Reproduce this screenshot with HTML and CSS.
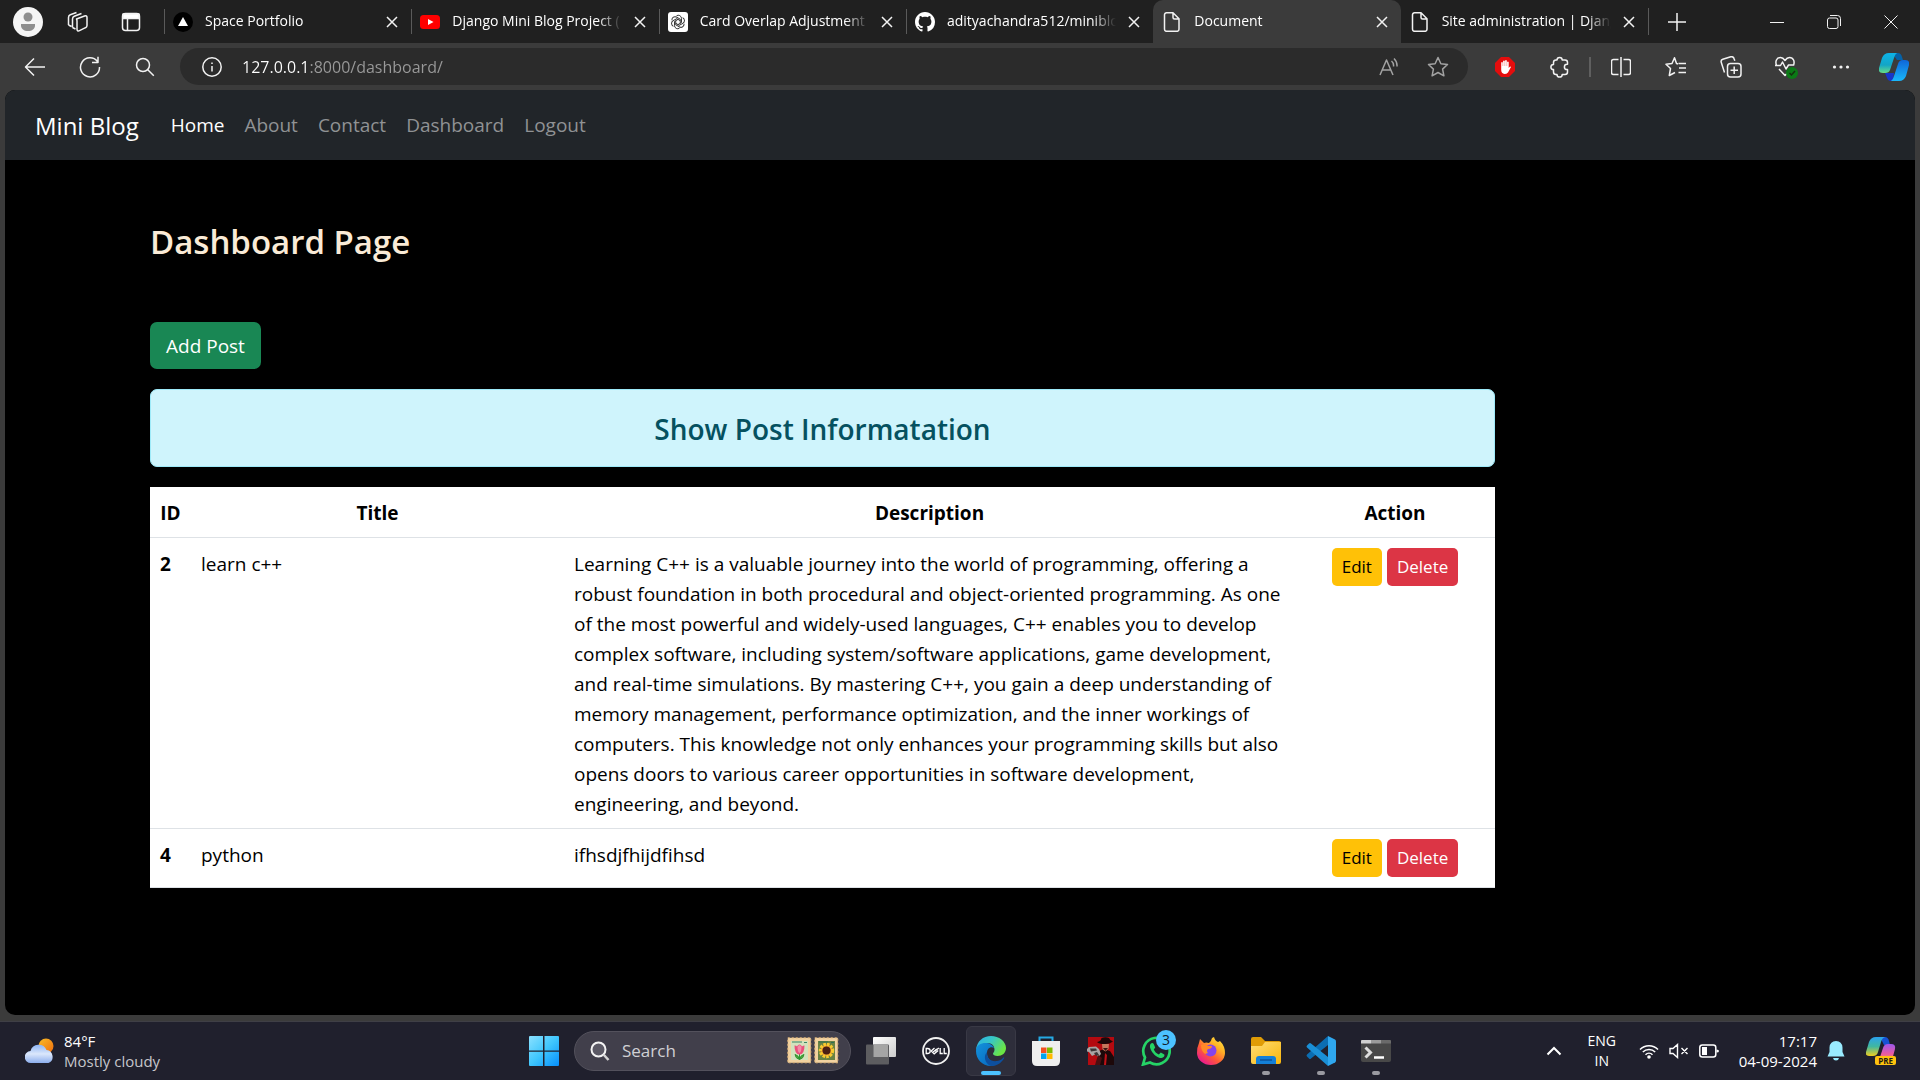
FILE: index.html
```html
<!DOCTYPE html>
<html lang="en">
<head>
<meta charset="utf-8">
<title>Document</title>
<link rel="stylesheet" href="styles.css">
</head>
<body>
<header class="browser">
  <div class="tabstrip">
    <div class="strip-tools">
      <button class="ghost profile" aria-label="Profile"><svg width="30" height="30" viewBox="0 0 30 30"><circle cx="15" cy="15" r="15" fill="#f5f5f5"/><circle cx="15" cy="10" r="4.500" fill="#8e8e8e"/><path d="M8 17h14v1.500c0 3.500-3 5.500-7 5.500s-7-2-7-5.500z" fill="#8e8e8e"/></svg></button>
      <button class="ghost" aria-label="Workspaces"><svg class="line" width="22" height="22" viewBox="0 0 22 22"><path d="M9.500 8l8-3c1.500-.5 2.500 0 2.500 1.500v8c0 1-.5 1.800-1.500 2.200l-6 3c-1.500.8-2.500 0-2.500-1.500V10c0-1-.2-1.500-.5-2zM5.500 16.500V8c0-1.500.6-2.200 1.800-2.700L14.500 2.500M1.500 14V6.500c0-1.500.6-2.300 1.800-2.800L9.500 1.500M5.500 16.500l3 1.500M1.500 14l3 1.500"/></svg></button>
      <button class="ghost" aria-label="Tab actions"><svg class="line" width="20" height="20" viewBox="0 0 20 20"><rect x="1.500" y="1.500" width="17" height="17" rx="3"/><path d="M2 2h16v4.500H2z" fill="#fff"/><path d="M6.500 6v12"/></svg></button>
    </div>
    <div class="tabs">
      <div class="tab"><svg width="20" height="20" viewBox="0 0 20 20"><circle cx="10" cy="10" r="10" fill="#000"/><path d="M10 5l5 9H5z" fill="#fff"/></svg><a class="tab-title" href="#">Space Portfolio</a><button class="ghost close" aria-label="Close tab"><svg class="line" width="12" height="12" viewBox="0 0 12 12"><path d="M1 1l10 10M11 1L1 11"/></svg></button></div>
      <div class="tab"><svg width="20" height="20" viewBox="0 0 20 20"><rect y="3" width="20" height="14" rx="3.500" fill="#f00"/><path d="M8 7l5.500 3L8 13z" fill="#fff"/></svg><a class="tab-title" href="#">Django Mini Blog Project (</a><button class="ghost close" aria-label="Close tab"><svg class="line" width="12" height="12" viewBox="0 0 12 12"><path d="M1 1l10 10M11 1L1 11"/></svg></button></div>
      <div class="tab"><svg width="20" height="20" viewBox="0 0 20 20"><rect width="20" height="20" rx="3" fill="#fff"/><g fill="none" stroke="#222" stroke-width=".9"><path id="petal" d="M8.500 3.800a3.200 3.200 0 0 1 5 2.700v4L10 12.600"/><use href="#petal" transform="rotate(60 10 10)"/><use href="#petal" transform="rotate(120 10 10)"/><use href="#petal" transform="rotate(180 10 10)"/><use href="#petal" transform="rotate(240 10 10)"/><use href="#petal" transform="rotate(300 10 10)"/></g></svg><a class="tab-title" href="#">Card Overlap Adjustment</a><button class="ghost close" aria-label="Close tab"><svg class="line" width="12" height="12" viewBox="0 0 12 12"><path d="M1 1l10 10M11 1L1 11"/></svg></button></div>
      <div class="tab"><svg width="20" height="20" viewBox="0 0 16 16"><path fill="#fff" d="M8 0C3.580 0 0 3.580 0 8c0 3.540 2.290 6.530 5.470 7.590.4.070.55-.17.55-.38 0-.19-.01-.82-.01-1.490-2.010.37-2.530-.49-2.690-.94-.09-.23-.48-.94-.82-1.130-.28-.15-.68-.52-.01-.53.63-.01 1.080.58 1.230.82.72 1.210 1.870.87 2.330.66.070-.52.28-.87.51-1.070-1.780-.2-3.640-.89-3.640-3.950 0-.87.31-1.590.82-2.150-.08-.2-.36-1.020.08-2.120 0 0 .67-.21 2.200.82.64-.18 1.320-.27 2-.27s1.360.09 2 .27c1.530-1.040 2.200-.82 2.200-.82.44 1.100.16 1.920.08 2.120.51.56.82 1.270.82 2.150 0 3.070-1.870 3.750-3.650 3.950.29.25.54.73.54 1.480 0 1.070-.01 1.930-.01 2.200 0 .21.15.46.55.38A8.010 8.010 0 0 0 16 8c0-4.420-3.580-8-8-8z"/></svg><a class="tab-title" href="#">adityachandra512/miniblo</a><button class="ghost close" aria-label="Close tab"><svg class="line" width="12" height="12" viewBox="0 0 12 12"><path d="M1 1l10 10M11 1L1 11"/></svg></button></div>
      <div class="tab active"><svg class="line doc" width="20" height="20" viewBox="0 0 20 20"><path d="M4.500.8h6.500l6 6v10.500a2 2 0 0 1-2 2H4.500a2 2 0 0 1-2-2V2.800a2 2 0 0 1 2-2zM11 1v4.500a1.500 1.500 0 0 0 1.500 1.500H17"/></svg><a class="tab-title" href="#">Document</a><button class="ghost close" aria-label="Close tab"><svg class="line" width="12" height="12" viewBox="0 0 12 12"><path d="M1 1l10 10M11 1L1 11"/></svg></button></div>
      <div class="tab"><svg class="line doc" width="20" height="20" viewBox="0 0 20 20"><path d="M4.500.8h6.500l6 6v10.500a2 2 0 0 1-2 2H4.500a2 2 0 0 1-2-2V2.800a2 2 0 0 1 2-2zM11 1v4.500a1.500 1.500 0 0 0 1.500 1.500H17"/></svg><a class="tab-title" href="#">Site administration | Djang</a><button class="ghost close" aria-label="Close tab"><svg class="line" width="12" height="12" viewBox="0 0 12 12"><path d="M1 1l10 10M11 1L1 11"/></svg></button></div>
    </div>
    <button class="ghost newtab" aria-label="New tab"><svg class="line" width="18" height="18" viewBox="0 0 18 18"><path d="M9 0v18M0 9h18"/></svg></button>
    <div class="window-controls">
      <button class="ghost" aria-label="Minimize"><svg class="line thin" width="14" height="14" viewBox="0 0 14 14"><path d="M0 7.500h14"/></svg></button>
      <button class="ghost" aria-label="Restore"><svg class="line thin" width="14" height="14" viewBox="0 0 14 14"><rect x=".5" y="3" width="10.500" height="10.500" rx="2"/><path d="M3 .5h7.500a3 3 0 0 1 3 3V11"/></svg></button>
      <button class="ghost" aria-label="Close"><svg class="line thin" width="14" height="14" viewBox="0 0 14 14"><path d="M.5.5l13 13M13.500.5l-13 13"/></svg></button>
    </div>
  </div>
  <div class="toolbar">
    <div class="nav-tools">
      <button class="ghost" aria-label="Back"><svg class="line" width="22" height="20" viewBox="0 0 22 20"><path d="M21 10H2M10 1.500L1.500 10l8.500 8.500"/></svg></button>
      <button class="ghost" aria-label="Refresh"><svg class="line" width="22" height="22" viewBox="0 0 22 22"><path d="M18.500 5.500A9.500 9.500 0 1 0 20.500 11M19 .8v5.700h-6"/></svg></button>
      <button class="ghost" aria-label="Search"><svg class="line" width="20" height="20" viewBox="0 0 20 20"><circle cx="8" cy="8" r="6.500"/><path d="M12.800 12.800l6 6"/></svg></button>
    </div>
    <div class="address">
      <button class="ghost" aria-label="Site information"><svg class="line" width="20" height="20" viewBox="0 0 20 20"><circle cx="10" cy="10" r="9.200"/><path d="M10 9v5.500M10 5.500v1.500"/></svg></button>
      <input class="url" type="text" value="127.0.0.1:8000/dashboard/" aria-label="Address">
      <button class="ghost dim" aria-label="Read aloud"><svg class="line" width="20" height="20" viewBox="0 0 20 20"><path d="M1 18L7.500 3 14 18M3.500 13h8M12.500 4a6 6 0 0 1 2 5.500M15 1.500a10 10 0 0 1 3 8"/></svg></button>
      <button class="ghost dim" aria-label="Favorite this page"><svg class="line" width="22" height="22" viewBox="0 0 22 22"><path d="M11 1.500l2.900 6.200 6.600.8-4.900 4.600 1.300 6.700L11 16.500l-5.900 3.300 1.300-6.700L1.500 8.500l6.600-.8z"/></svg></button>
    </div>
    <div class="extensions">
      <button class="ghost" aria-label="Ad blocker"><svg width="20" height="20" viewBox="0 0 20 20"><path d="M6 0h8l6 6v8l-6 6H6l-6-6V6z" fill="#e40d0d"/><path d="M6.200 10V5.500q.8-1 1.600 0V9h.3V4q.9-1 1.700 0v5h.3V3.500q.9-1 1.700 0V9h.3V5q.8-1 1.600 0v6l1-1.200q1-.6 1.300.2L13 15.500Q11.500 17 9.500 17q-3.300-.5-3.300-4z" fill="#fff"/></svg></button>
      <button class="ghost" aria-label="Extensions"><svg class="line" width="20" height="22" viewBox="0 0 20 22"><path d="M7 4a2.600 2.600 0 0 1 5.200 0H15a2.500 2.500 0 0 1 2.500 2.500V8.300H17a2.500 2.500 0 0 0 0 5.200h.5v2.500A2.500 2.500 0 0 1 15 18.500h-2.800a2.600 2.600 0 0 1-5.200 0H6A2.500 2.500 0 0 1 3.500 16v-2.400a2.600 2.600 0 0 1 0-5.200V6.500A2.500 2.500 0 0 1 6 4z"/></svg></button>
      <span class="rule"></span>
      <button class="ghost" aria-label="Split screen"><svg class="line" width="20" height="20" viewBox="0 0 20 20"><path d="M7.500 2.500h-5a2 2 0 0 0-2 2v11a2 2 0 0 0 2 2h5M12.500 2.500h5a2 2 0 0 1 2 2v11a2 2 0 0 1-2 2h-5M10 0v20"/></svg></button>
      <button class="ghost" aria-label="Favorites"><svg class="line" width="22" height="20" viewBox="0 0 22 20"><path d="M13 7l-1.500-.5L9.500.8 7 6.500l-6 .8 4.500 4.200L4.300 18.500l5.700-3M13.500 6.500H21M14 11h7M13.500 15.500H21"/></svg></button>
      <button class="ghost" aria-label="Collections"><svg class="line" width="22" height="22" viewBox="0 0 22 22"><rect x="7.500" y="7.500" width="13.500" height="13.500" rx="3"/><path d="M14.200 10.500v7.500M10.500 14.200h7.500M4.500 16.500L1.300 6.500a2.500 2.500 0 0 1 1.500-3.200l8-2.500A2.500 2.500 0 0 1 14 2.500l.8 2.200"/></svg></button>
      <button class="ghost" aria-label="Browser essentials"><svg width="24" height="24" viewBox="0 0 24 24"><path class="line" d="M2.500 10.500C1 6.500 2.500 2.500 6.500 2.500c2.500 0 3.500 1.500 4.500 3 1-1.500 2-3 4.500-3 4 0 5.500 4 4 8M1 10.500h5.500l2-3.500 3.500 7 2.500-4h5M5 14l6 6.500 2-2"/><circle cx="18" cy="18" r="6" fill="#0b7a16"/><path d="M15.500 18l2 2 3.500-4" fill="none" stroke="#14310f" stroke-width="1.500"/></svg></button>
      <button class="ghost" aria-label="Settings and more"><svg width="18" height="18" viewBox="0 0 18 18" fill="#f2f2f2"><circle cx="2.500" cy="9" r="1.600"/><circle cx="9" cy="9" r="1.600"/><circle cx="15.500" cy="9" r="1.600"/></svg></button>
      <button class="ghost" aria-label="Copilot"><svg width="30" height="28" viewBox="0 0 30 28"><defs><linearGradient id="cpA" x1="0" y1="0" x2="0" y2="1"><stop offset="0" stop-color="#0db3e8"/><stop offset=".6" stop-color="#13a5c6"/><stop offset="1" stop-color="#66dd87"/></linearGradient><linearGradient id="cpB" x1="0" y1="0" x2="0" y2="1"><stop offset="0" stop-color="#0f66d8"/><stop offset="1" stop-color="#19b8fa"/></linearGradient></defs><path d="M13 0h6q3 0 4 4l1 3h-6z" fill="#0562a8"/><path d="M6 20h9l-1 8h-2q-3 0-4-3z" fill="#1736c9"/><path d="M10 0h8q-2 1-3 5l-4 12q-1 3-5 3H4q-5 0-4-5L3 5q2-5 7-5z" fill="url(#cpA)"/><path d="M20 28h-8q2-1 3-5l4-12q1-4 5-4h2q5 0 4 5l-3 11q-2 5-7 5z" fill="url(#cpB)"/></svg></button>
    </div>
  </div>
</header>

<div class="viewport">
  <div class="page">
    <nav class="navbar">
      <a class="brand" href="#">Mini Blog</a>
      <a class="nav-link current" href="#">Home</a>
      <a class="nav-link" href="#">About</a>
      <a class="nav-link" href="#">Contact</a>
      <a class="nav-link" href="#">Dashboard</a>
      <a class="nav-link" href="#">Logout</a>
    </nav>
    <main class="content">
      <h1>Dashboard Page</h1>
      <a class="btn add" href="#">Add Post</a>
      <h2 class="alert">Show Post Informatation</h2>
      <table class="posts">
        <thead>
          <tr><th class="col-id" scope="col">ID</th><th class="col-title" scope="col">Title</th><th scope="col">Description</th><th class="col-action" scope="col">Action</th></tr>
        </thead>
        <tbody>
          <tr>
            <th scope="row">2</th><td>learn c++</td>
            <td>Learning C++ is a valuable journey into the world of programming, offering a<br>robust foundation in both procedural and object-oriented programming. As one<br>of the most powerful and widely-used languages, C++ enables you to develop<br>complex software, including system/software applications, game development,<br>and real-time simulations. By mastering C++, you gain a deep understanding of<br>memory management, performance optimization, and the inner workings of<br>computers. This knowledge not only enhances your programming skills but also<br>opens doors to various career opportunities in software development,<br>engineering, and beyond.</td>
            <td class="action-cell"><div class="actions"><a class="btn small edit" href="#">Edit</a><button class="btn small delete">Delete</button></div></td>
          </tr>
          <tr>
            <th scope="row">4</th><td>python</td><td>ifhsdjfhijdfihsd</td>
            <td class="action-cell"><div class="actions"><a class="btn small edit" href="#">Edit</a><button class="btn small delete">Delete</button></div></td>
          </tr>
        </tbody>
      </table>
    </main>
  </div>
</div>

<footer class="taskbar">
  <button class="ghost weather">
    <svg width="30" height="26" viewBox="0 0 30 26"><defs><linearGradient id="sun" x1="0" y1="0" x2="1" y2="1"><stop offset="0" stop-color="#f9bd27"/><stop offset="1" stop-color="#ef6c0d"/></linearGradient><linearGradient id="cloud" x1="0" y1="0" x2="0" y2="1"><stop offset="0" stop-color="#8fb6f5"/><stop offset=".5" stop-color="#dbe7fb"/><stop offset="1" stop-color="#8caeee"/></linearGradient></defs><circle cx="21" cy="8" r="7.500" fill="url(#sun)"/><path d="M6 25a6 6 0 0 1-.5-12 8.500 8.500 0 0 1 16-1A6.800 6.800 0 0 1 23.500 25z" fill="url(#cloud)"/></svg>
    <span class="weather-text"><span class="temp">84°F</span><span class="sky">Mostly cloudy</span></span>
  </button>
  <div class="apps">
    <button class="app" aria-label="Start"><svg width="30" height="30" viewBox="0 0 30 30"><defs><linearGradient id="win" gradientUnits="userSpaceOnUse" x1="0" y1="0" x2="30" y2="30"><stop offset="0" stop-color="#8be1ff"/><stop offset=".5" stop-color="#3fc6fd"/><stop offset="1" stop-color="#068ffb"/></linearGradient></defs><path d="M0 1q0-1 1-1h13v14.500H0zM15.500 0H29q1 0 1 1v13.500H15.500zM0 15.800h14V30H1q-1 0-1-1zM15.500 15.800H30V29q0 1-1 1H15.500z" fill="url(#win)"/></svg></button>
    <label class="search">
      <svg width="20" height="20" viewBox="0 0 20 20"><circle cx="8.500" cy="8.500" r="7" fill="#5b5965" stroke="#f4f4f4" stroke-width="2"/><path d="M13.500 13.500l5 5.500" stroke="#d5d5d5" stroke-width="2.500"/></svg>
      <input type="text" placeholder="Search" aria-label="Search">
      <svg width="52" height="27" viewBox="0 0 52 27"><g fill="#f2d2a0" stroke="#d9ae74" stroke-dasharray="2 2"><rect x=".8" y=".8" width="23" height="25"/><rect x="27.800" y=".8" width="23" height="25"/></g><path fill="#d3e2bd" d="M4 4h17v19H4z"/><path fill="#688243" d="M31 4h17v19H31z"/><path d="M12.500 15v7M12.500 22.500q-4-1-4.500-5 3.500.5 4.500 5 1-4.500 4.500-5-.5 4-4.500 5z" stroke="#2f9132" fill="#52ad3e"/><path d="M7.500 8.500q2 0 2.500 1 1-2 2.500-2t2.500 2q1-1 2.500-1 0 9-5 9t-5-9z" fill="#ea4f7c"/><path d="M10.500 10q2-4 4 0 0 5-2 6-2-1-2-6z" fill="#f58aa6"/><circle cx="39.500" cy="13.500" r="6" fill="#e9902b" stroke="#f8ca2f" stroke-width="3.500" stroke-dasharray="2.500 1"/><circle cx="39.500" cy="13.500" r="4" fill="#4a1f14"/><path d="M5 5h10M17 5.500h3" stroke="#3c8462"/><path d="M32 5h9M44 5.500h3" stroke="#2f6d52"/></svg>
    </label>
    <button class="app" aria-label="Task view"><svg width="30" height="28" viewBox="0 0 30 28"><defs><linearGradient id="tv" x1="0" y1="0" x2="1" y2="1"><stop offset="0" stop-color="#fff"/><stop offset="1" stop-color="#ccc"/></linearGradient></defs><rect x="7" width="23" height="20" rx="1" fill="url(#tv)"/><rect y="7.500" width="23" height="20" rx="1" fill="#5d5d60"/><path d="M7.500 8H22v12H7.500z" fill="#a5a5a5"/></svg></button>
    <button class="app" aria-label="Dell"><svg width="28" height="28" viewBox="0 0 28 28"><circle cx="14" cy="14" r="13" fill="none" stroke="#f1f1f1" stroke-width="1.800"/><g fill="none" stroke="#fff" stroke-width="1.300"><path d="M4.200 11.500v5h1.300q2.700 0 2.700-2.500t-2.700-2.500z"/><path d="M12.500 11l-3.300 3 3 2.800 4-3.300M10.800 15.300l4-3.200M16.800 11l-4 3.300M18.200 11v5.500h2.600M22.200 11v5.500h2.600"/></g></svg></button>
    <button class="app running focused" aria-label="Microsoft Edge"><svg width="30" height="30" viewBox="0 0 30 30"><defs><linearGradient id="e1" x1="0" y1="0" x2="1" y2=".5"><stop offset="0" stop-color="#2aaee8"/><stop offset=".5" stop-color="#38c7c6"/><stop offset="1" stop-color="#6be644"/></linearGradient><linearGradient id="e2" x1="0" y1="0" x2="1" y2="1"><stop offset="0" stop-color="#1492dc"/><stop offset="1" stop-color="#0665bb"/></linearGradient></defs><path d="M0 14C1 5 7 0 15 0s15 5.500 15 12c0 5-4 8-8.500 8-3 0-4.500-1-4.500-2.200 0-1 1.500-1.600 1.500-4C18.500 9 14 6 9 7.500 4.500 9 1 11 0 14z" fill="url(#e1)"/><path d="M0 15C0 9 5 7 9.500 7c4 0 7.500 2 8.500 5-3-2-7 0-7 5 0 6 5 10 10 9.500C19 29 17 30 15 30 6 30 0 23 0 15z" fill="url(#e2)"/><path d="M11 16c-1 6 4 10 10 9 3-.5 5.500-2 6.500-3.500.6-.8 1 .1.500.9C25 27.500 20 30 15 30c-6-2-8-10-4-14z" fill="#0d4f9e"/></svg></button>
    <button class="app" aria-label="Microsoft Store"><svg width="30" height="30" viewBox="0 0 30 30"><path d="M8.500 6V1.500h13V6" fill="none" stroke="#25a9e4" stroke-width="2"/><path d="M1 5h28v20q0 5-5 5H6q-5 0-5-5z" fill="#efefef"/><path d="M10 11.500h5.500V17H10z" fill="#f25022"/><path d="M16 11.500h5.500V17H16z" fill="#7fba00"/><path d="M10 17.500h5.500V23H10z" fill="#00a4ef"/><path d="M16 17.500h5.500V23H16z" fill="#ffb900"/></svg></button>
    <button class="app" aria-label="Game"><svg width="28" height="28" viewBox="0 0 28 28"><path d="M1 0h26v28H1z" fill="#b40a10"/><path d="M12 14l5-2 6 2 4 6v8H11z" fill="#1d0809"/><path d="M10 5q4-.5 4.500-4 4-1.500 7.500 0 1 3 4 3.500-4 3-9 2.500-5 0-7-2z" fill="#1c0809"/><path d="M15 7h7l-.5 5-3 2.500-3-2z" fill="#c4785c"/><path d="M16 11h5l-2.500 3z" fill="#3b1512"/><path d="M0 12l2-2 7-.5 3 2.500 2 5-3 3-2-3-4 2-3-4-2-.5z" fill="#a9a4a4"/><path d="M3 11.500h6l1 2-6 1zM7 16l3-1 2 3-3 1z" fill="#3a3536"/><path d="M11 18l4 3-2 7H8z" fill="#4a0f11"/><path d="M18 16l2 2-1 10h-2z" fill="#c01218"/></svg></button>
    <button class="app" aria-label="WhatsApp"><svg width="30" height="30" viewBox="0 0 30 30"><path d="M2 28.500l2-7A13.200 13.200 0 1 1 9 26.500z" fill="none" stroke="#25d366" stroke-width="2.700"/><path d="M10 7.500c-4 4 4.500 15 10.500 14.500 2-.2 3.500-2 2.800-3.500l-3.500-2-2 2c-2.500-1-4-2.700-5-5l1.400-2-1.500-3.500q-1-1.500-2.700-.5z" fill="#25d366"/></svg><span class="badge">3</span></button>
    <button class="app" aria-label="Firefox"><svg width="28" height="28" viewBox="0 0 28 28"><defs><linearGradient id="ff" x1="1" y1="0" x2=".2" y2="1"><stop offset="0" stop-color="#fff04a"/><stop offset=".35" stop-color="#ffb325"/><stop offset=".65" stop-color="#ff5a37"/><stop offset="1" stop-color="#e8119b"/></linearGradient></defs><path d="M2 6l1-4 4 4q2-1 5 0 2-1 3-5l2-1q1 4 4 5l2-1q5 5 5 12a14 12 0 0 1-28 0q0-6 2-10z" fill="url(#ff)"/><circle cx="13.500" cy="13.500" r="6" fill="#8544ec"/><path d="M4 8q4-2 7 1h4q0 3-4 3-2 2 0 4l-3 1q-4-3-4-9z" fill="#ff8a28"/></svg></button>
    <button class="app running" aria-label="File Explorer"><svg width="30" height="27" viewBox="0 0 30 27"><defs><linearGradient id="fo" x1="0" y1="0" x2="1" y2="1"><stop offset="0" stop-color="#ffdd76"/><stop offset="1" stop-color="#f9b60a"/></linearGradient></defs><path d="M0 2q0-2 2-2h8l4 4h14q2 0 2 2v4H0z" fill="#e09c06"/><path d="M0 9h11l3-4h16v20q0 2-2 2H2q-2 0-2-2z" fill="url(#fo)"/><path d="M5 27v-5q0-3 3-3h14q3 0 3 3v5z" fill="#1480d8"/><path d="M9 23h12" stroke="#0b539c" stroke-width="1.500"/></svg></button>
    <button class="app running" aria-label="Visual Studio Code"><svg width="30" height="30" viewBox="0 0 30 30"><path d="M22 0v9L5 22.500q-1 1-2 0l-2-2q-1-1 0-2z" fill="#0b6db2"/><path d="M1 9.500l2-2q1-1 2 0L22 21v9L1 11.500q-1-1 0-2z" fill="#1a8fd6"/><path d="M22 0l7 3.500q1 .5 1 2v19q0 1.500-1 2L22 30z" fill="#2fa7ee"/></svg></button>
    <button class="app running" aria-label="Terminal"><svg width="30" height="24" viewBox="0 0 30 24"><rect y="1" width="30" height="22" rx="2" fill="#484848"/><path d="M0 4.500V2q0-1 1-1h9v3.500z" fill="#d0d0d0"/><path d="M10 1h10v3.500H10z" fill="#9b9b9b"/><path d="M20 1h9q1 0 1 1v2.500H20z" fill="#6a6a6a"/><path d="M4.500 8.500l5 5-5 5" fill="none" stroke="#ddd" stroke-width="3"/><path d="M13 18.500h10" stroke="#fff" stroke-width="2.500"/></svg></button>
  </div>
  <div class="tray">
    <button class="ghost chevron" aria-label="Show hidden icons"><svg width="16" height="10" viewBox="0 0 16 10"><path d="M1.500 8.500L8 2l6.500 6.500" fill="none" stroke="#fff" stroke-width="2"/></svg></button>
    <button class="ghost language">ENG<br>IN</button>
    <button class="ghost status" aria-label="Network, volume and battery">
      <svg width="20" height="16" viewBox="0 0 20 16"><g fill="none" stroke="#fff" stroke-width="1.500"><path d="M1 6.500a12.500 12.500 0 0 1 18 0M3.800 9a8.800 8.800 0 0 1 12.400 0M6.500 11.700a5 5 0 0 1 7 0"/></g><circle cx="10" cy="14" r="1.800" fill="#fff"/></svg>
      <svg width="20" height="16" viewBox="0 0 20 16" fill="none" stroke="#fff" stroke-width="1.400"><path d="M1 5.500h3L8.500 1.500v13L4 10.500H1zM12.500 5l6 6M18.500 5l-6 6"/></svg>
      <svg width="20" height="16" viewBox="0 0 20 16"><rect x=".8" y="2" width="16" height="12" rx="2.500" fill="none" stroke="#fff" stroke-width="1.500"/><path d="M3 4h5v8H3zM17.500 6.500q2.500 0 2.500 1.500t-2.500 1.500z" fill="#fff"/></svg>
    </button>
    <button class="ghost clock">17:17<br>04-09-2024</button>
    <button class="ghost" aria-label="Notifications"><svg width="18" height="20" viewBox="0 0 18 20"><path d="M9 0q6 0 6.500 6.500V11l2 4.500H.5l2-4.500V6.500Q3 0 9 0zM6 17h6q-.5 2.500-3 2.500T6 17z" fill="#99ebff"/></svg></button>
    <button class="ghost copilot" aria-label="Copilot preview"><svg width="30" height="28" viewBox="0 0 30 28"><defs><linearGradient id="ca" x1="0" y1="0" x2="0" y2="1"><stop offset="0" stop-color="#2ba2ee"/><stop offset=".5" stop-color="#40b7a0"/><stop offset="1" stop-color="#f0ce1f"/></linearGradient><linearGradient id="cb" x1="0" y1="0" x2="0" y2="1"><stop offset="0" stop-color="#9c58ed"/><stop offset=".6" stop-color="#e75aa4"/><stop offset="1" stop-color="#f98a5b"/></linearGradient></defs><path d="M14 0h5q3 0 4 4l1 4h-6z" fill="#1652d4"/><path d="M10 0h9q-3 1-4 5l-3 10q-1 4-5 4H3q-4 0-3-4L3 5q2-5 7-5z" fill="url(#ca)"/><path d="M13 23l4-12q1-4 5-4h3q5 0 4 5l-3 11z" fill="url(#cb)"/></svg><span class="pre">PRE</span></button>
  </div>
</footer>
</body>
</html>
```
FILE: styles.css
```css
* { box-sizing: border-box; }

body {
  margin: 0;
  min-height: 100vh;
  display: flex;
  flex-direction: column;
  background: #3b3b3b;
  color: #fff;
  font-family: "Open Sans", "Noto Sans", sans-serif;
  font-size: 19px;
}

a { color: inherit; text-decoration: none; }
button, input { font: inherit; color: inherit; }
svg { display: block; flex: none; }

.ghost {
  display: flex;
  align-items: center;
  justify-content: center;
  border: 0;
  padding: 0;
  background: none;
}

.line { fill: none; stroke: #f2f2f2; stroke-width: 1.5; stroke-linejoin: round; }
.thin { stroke-width: 1; }

/* Browser tabs */
.tabstrip { display: flex; height: 43px; background: #202020; font-size: 14px; }
.strip-tools { display: flex; align-items: center; gap: 32px; width: 164px; padding-left: 13px; }
.strip-tools .profile { margin-right: -8px; }
.tabs { flex: 1; display: flex; min-width: 0; }

.tab {
  flex: 1 1 0;
  min-width: 0;
  display: flex;
  align-items: center;
  gap: 12px;
  padding: 0 13px 0 9px;
  position: relative;
}
.tab::before {
  content: "";
  position: absolute;
  left: 0;
  top: 9px;
  bottom: 9px;
  width: 1px;
  background: #5a5a5a;
}
.tab:last-child { border-right: 1px solid transparent; border-image: linear-gradient(transparent 9px, #5a5a5a 9px, #5a5a5a 34px, transparent 34px) 1; }
.tab.active { background: #3b3b3b; border-radius: 10px 10px 0 0; }
.tab.active::before, .tab.active + .tab::before { display: none; }
.tab-title {
  flex: 1;
  overflow: hidden;
  padding-bottom: 2px;
  white-space: nowrap;
  mask-image: linear-gradient(to right, #000 calc(100% - 24px), transparent);
}
.newtab { width: 56px; }
.window-controls { display: flex; margin-left: 43px; padding-right: 1px; }
.window-controls .ghost { width: 57px; }

/* Browser toolbar */
.toolbar { display: flex; align-items: center; height: 47px; }
.nav-tools { display: flex; width: 180px; padding-left: 7px; }
.nav-tools .ghost { width: 55px; }
.address {
  flex: 1;
  display: flex;
  align-items: center;
  gap: 20px;
  height: 37px;
  padding: 0 16px 0 22px;
  border-radius: 19px;
  background: #2b2b2b;
}
.address .dim { opacity: .6; width: 29px; }
.url {
  flex: 1;
  min-width: 0;
  border: 0;
  padding: 0;
  outline: 0;
  font-size: 16px;
  color: transparent;
  background: linear-gradient(to right, #fff 68px, #9a9a9a 68px);
  background-clip: text;
}
.extensions { display: flex; align-items: center; padding-left: 9px; }
.extensions .ghost { width: 55px; }
.extensions .ghost:last-child { width: 52px; }
.rule { width: 2px; height: 20px; margin: 0 2px; background: #5f5f5f; }

/* Web page */
.viewport { flex: 1; display: flex; padding: 0 5px 6px; }
.page { flex: 1; min-width: 0; border-radius: 10px; overflow: hidden; background: #000; }
.navbar {
  display: flex;
  align-items: center;
  gap: 20px;
  height: 70px;
  padding: 0 30px;
  background: #212529;
}
.brand { margin-right: 12px; font-size: 24px; }
.nav-link { color: #909294; }
.nav-link.current { color: #fff; }

.content { padding: 60px 420px 60px 145px; }
h1, h2 { margin: 0; font-weight: 600; }
h1 { font-size: 33px; line-height: 44px; color: #faebd7; margin-bottom: 58px; }

.btn {
  display: inline-block;
  border: 0;
  border-radius: 7px;
  padding: 9px 16px 7px;
  line-height: 31px;
}
.add { background: #198754; }
.small { padding: 0 10px; font-size: 17px; line-height: 38px; border-radius: 5px; }
.edit { background: #ffc107; color: #000; }
.delete { background: #dc3545; color: #fff; }

.alert {
  margin: 20px 0;
  padding: 21px 20px 19px;
  border: 1px solid #9eeaf9;
  border-radius: 7px;
  background: #cff4fc;
  color: #055160;
  font-size: 28px;
  line-height: 36px;
  text-align: center;
}

.posts {
  width: 100%;
  table-layout: fixed;
  border-collapse: collapse;
  background: #fff;
  color: #000;
  line-height: 30px;
}
.posts th, .posts td {
  padding: 11px 10px 9px;
  border-bottom: 1px solid #dee2e6;
  text-align: left;
  vertical-align: top;
  white-space: nowrap;
}
.posts .action-cell { padding: 10px; }
.posts thead th { text-align: center; }
.posts th { font-weight: 700; }
.col-id { width: 41px; }
.col-title { width: 373px; }
.col-action { width: 200px; }
.actions { display: flex; justify-content: center; gap: 5px; }

/* Taskbar */
.taskbar {
  display: grid;
  grid-template-columns: 1fr auto 1fr;
  align-items: center;
  height: 59px;
  padding-bottom: 1px;
  background: #20202d;
  border-top: 1px solid #3f3f46;
  font-size: 15px;
  line-height: 20px;
}
.weather { justify-self: start; gap: 9px; padding-left: 25px; text-align: left; }
.weather-text { display: grid; }
.sky { color: #c6c6cb; }
.apps { display: flex; align-items: center; gap: 5px; }
.app {
  position: relative;
  display: grid;
  place-items: center;
  width: 50px;
  height: 50px;
  padding: 0;
  border: 1px solid transparent;
  border-radius: 6px;
  background: none;
}
.focused { background: #2e2e3b; border-color: #393945; }
.running::after {
  content: "";
  position: absolute;
  bottom: 0;
  left: 20px;
  width: 8px;
  height: 4px;
  border-radius: 2px;
  background: #9a9aa1;
}
.focused::after { left: 14px; width: 20px; background: #4cc2ff; }
.badge {
  position: absolute;
  top: 3px;
  right: 4px;
  width: 20px;
  height: 20px;
  border-radius: 10px;
  background: #4cc2ff;
  color: #10202c;
  font-size: 14px;
}
.search {
  display: flex;
  align-items: center;
  gap: 12px;
  width: 277px;
  height: 40px;
  padding: 0 11px 0 15px;
  border: 1px solid #53515c;
  border-radius: 20px;
  background: #413f4b;
}
.search input {
  flex: 1;
  min-width: 0;
  border: 0;
  padding: 0;
  outline: 0;
  background: none;
  font-size: 17px;
}
.search input::placeholder { color: #d0d0d4; opacity: 1; }
.tray { justify-self: end; display: flex; align-items: center; padding-right: 24px; }
.language { width: 60px; font-size: 14px; }
.chevron { width: 36px; }
.status { gap: 10px; padding-left: 7px; }
.clock { text-align: right; margin: 0 10px 0 20px; }
.copilot { position: relative; margin-left: 21px; }
.pre {
  position: absolute;
  right: 0;
  bottom: 0;
  padding: 0 3px;
  border-radius: 2px;
  background: #ffc20e;
  color: #1c1a12;
  font-size: 8px;
  font-weight: 700;
  line-height: 9px;
}
```
